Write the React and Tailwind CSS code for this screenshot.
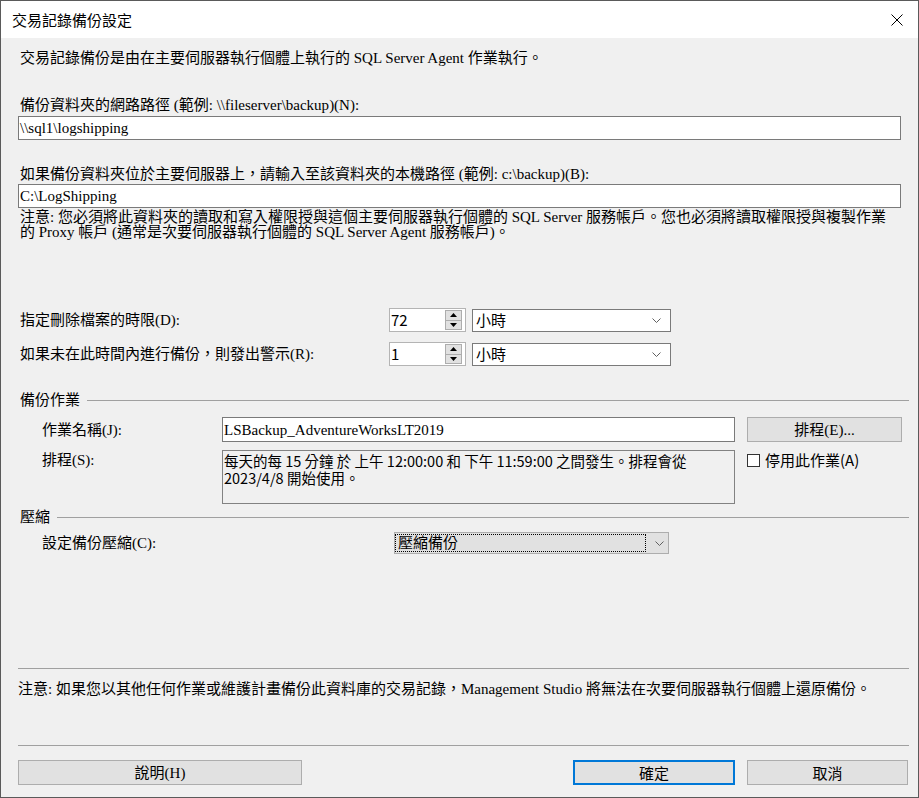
import React from 'react'

const MING = "font-['Liberation_Serif','Noto_Sans_CJK_TC',serif]"
const HEI = "font-['Noto_Sans_CJK_TC','Liberation_Sans',sans-serif]"

function Chevron() {
  return (
    <svg width="9" height="5" viewBox="0 0 9 5" className="shrink-0">
      <path d="M0.5 0.5L4.5 4.5L8.5 0.5" fill="none" stroke="#606060" strokeWidth="1" />
    </svg>
  )
}

function Spinner({ value }) {
  return (
    <div className="w-[77px] h-[24px] bg-white border border-[#b4b4b4] flex items-center">
      <span className={`${HEI} flex-1 pl-[1px] leading-[20px]`}>{value}</span>
      <div className="w-[17px] h-[20px] mr-[3px] flex flex-col">
        <div className="flex-1 bg-[#e1e1e1] border border-[#adadad] flex items-center justify-center">
          <svg width="7" height="4" viewBox="0 0 7 4">
            <path d="M0 4L3.5 0L7 4Z" fill="#000" />
          </svg>
        </div>
        <div className="flex-1 bg-[#e1e1e1] border border-t-0 border-[#adadad] flex items-center justify-center">
          <svg width="7" height="4" viewBox="0 0 7 4">
            <path d="M0 0L3.5 4L7 0Z" fill="#000" />
          </svg>
        </div>
      </div>
    </div>
  )
}

function UnitCombo() {
  return (
    <div className="ml-[6px] w-[199px] h-[23px] bg-white border border-[#7a7a7a] flex items-center justify-between pl-[3px] pr-[9px]">
      <span className={`${HEI} leading-[20px]`}>小時</span>
      <Chevron />
    </div>
  )
}

function SectionHeader({ children }) {
  return (
    <div className="ml-[2px] flex items-center leading-[20px]">
      <span className="whitespace-nowrap">{children}</span>
      <div className="flex-1 h-px bg-[#a0a0a0] ml-[7px]" />
    </div>
  )
}

export default function App() {
  return (
    <div className="w-[919px] h-[798px] border border-[#5a5a5a] bg-[#f0f0f0] flex flex-col overflow-hidden text-black">
      <div className="h-[37px] shrink-0 bg-white flex items-center justify-between pl-[11px] pr-[15px]">
        <span className={`${HEI} text-[15px] leading-[20px]`}>交易記錄備份設定</span>
        <svg width="12" height="12" viewBox="0 0 12 12">
          <path d="M0.5 0.5L11.5 11.5M11.5 0.5L0.5 11.5" stroke="#000" strokeWidth="1" />
        </svg>
      </div>

      <div className={`flex-1 flex flex-col pl-[17px] pr-[9px] ${MING} text-[15px]`}>
        <p className="mt-[10px] ml-[2px] leading-[20px] whitespace-nowrap">
          交易記錄備份是由在主要伺服器執行個體上執行的 SQL Server Agent 作業執行。
        </p>

        <p className="mt-[27px] ml-[2px] leading-[20px] whitespace-nowrap">
          備份資料夾的網路路徑 (範例: {'\\\\fileserver\\backup'})(N):
        </p>
        <div className="mt-px mr-[8px] h-[24px] bg-white border border-[#7a7a7a] flex items-center pl-[1px] leading-[20px]">
          {'\\\\sql1\\logshipping'}
        </div>

        <p className="mt-[24px] ml-[2px] leading-[20px] whitespace-nowrap">
          如果備份資料夾位於主要伺服器上，請輸入至該資料夾的本機路徑 (範例: {'c:\\backup'})(B):
        </p>
        <div className="mr-[8px] h-[24px] bg-white border border-[#7a7a7a] flex items-center pl-[1px] leading-[20px]">
          {'C:\\LogShipping'}
        </div>
        <p className="mt-[2px] ml-[2px] leading-[15px] whitespace-nowrap">
          注意: 您必須將此資料夾的讀取和寫入權限授與這個主要伺服器執行個體的 SQL Server 服務帳戶。您也必須將讀取權限授與複製作業
          <br />
          的 Proxy 帳戶 (通常是次要伺服器執行個體的 SQL Server Agent 服務帳戶)。
        </p>

        <div className="mt-[68px] h-[24px] flex items-center">
          <span className="ml-[2px] w-[369px] leading-[20px] whitespace-nowrap">指定刪除檔案的時限(D):</span>
          <Spinner value="72" />
          <UnitCombo />
        </div>
        <div className="mt-[10px] h-[24px] flex items-center">
          <span className="ml-[2px] w-[369px] leading-[20px] whitespace-nowrap">如果未在此時間內進行備份，則發出警示(R):</span>
          <Spinner value="1" />
          <UnitCombo />
        </div>

        <div className="mt-[24px]">
          <SectionHeader>備份作業</SectionHeader>
        </div>
        <div className="mt-[7px] pl-[24px] flex items-start">
          <span className="w-[180px] h-[25px] flex items-center leading-[20px] whitespace-nowrap">作業名稱(J):</span>
          <div className="w-[513px] h-[25px] bg-white border border-[#7a7a7a] flex items-center pl-[1px] leading-[20px]">
            LSBackup_AdventureWorksLT2019
          </div>
          <button className="ml-[12px] w-[155px] h-[25px] bg-[#e1e1e1] border border-[#adadad] flex items-center justify-center leading-[20px]">
            排程(E)...
          </button>
        </div>
        <div className="mt-[8px] pl-[24px] flex items-start">
          <span className="w-[180px] leading-[20px] whitespace-nowrap">排程(S):</span>
          <div className={`${HEI} w-[513px] h-[54px] bg-[#f0f0f0] border border-[#828282] pl-[1px] pt-[1px] text-[14.5px] leading-[17px] whitespace-nowrap`}>
            每天的每 15 分鐘 於 上午 12:00:00 和 下午 11:59:00 之間發生。排程會從
            <br />
            2023/4/8 開始使用。
          </div>
          <div className="ml-[12px] h-[20px] flex items-center">
            <div className="w-[13px] h-[13px] bg-white border border-[#333333]" />
            <span className={`${HEI} ml-[5px] leading-[20px] whitespace-nowrap`}>停用此作業(A)</span>
          </div>
        </div>

        <div className="mt-[3px]">
          <SectionHeader>壓縮</SectionHeader>
        </div>
        <div className="mt-[5px] pl-[24px] h-[22px] flex items-center">
          <span className="w-[352px] leading-[20px] whitespace-nowrap">設定備份壓縮(C):</span>
          <div className="w-[275px] h-[22px] bg-[#e1e1e1] border border-[#adadad] flex items-center">
            <div className="w-[251px] h-[18px] border border-dotted border-black flex items-center pl-[2px] leading-[16px]">
              壓縮備份
            </div>
            <div className="ml-[9px]">
              <Chevron />
            </div>
          </div>
        </div>

        <div className="mt-[114px] h-px bg-[#a0a0a0]" />
        <p className="mt-[10px] leading-[20px] whitespace-nowrap">
          注意: 如果您以其他任何作業或維護計畫備份此資料庫的交易記錄，Management Studio 將無法在次要伺服器執行個體上還原備份。
        </p>
        <div className="mt-[46px] h-px bg-[#a0a0a0]" />

        <div className="mt-[14px] flex items-center">
          <button className="w-[284px] h-[25px] bg-[#e1e1e1] border border-[#adadad] flex items-center justify-center leading-[20px]">
            說明(H)
          </button>
          <button className={`${HEI} ml-[271px] w-[162px] h-[25px] bg-[#e1e1e1] border-2 border-[#0078d7] flex items-center justify-center leading-[20px]`}>
            確定
          </button>
          <button className={`${HEI} ml-[12px] w-[161px] h-[25px] bg-[#e1e1e1] border border-[#adadad] flex items-center justify-center leading-[20px]`}>
            取消
          </button>
        </div>
      </div>
    </div>
  )
}
